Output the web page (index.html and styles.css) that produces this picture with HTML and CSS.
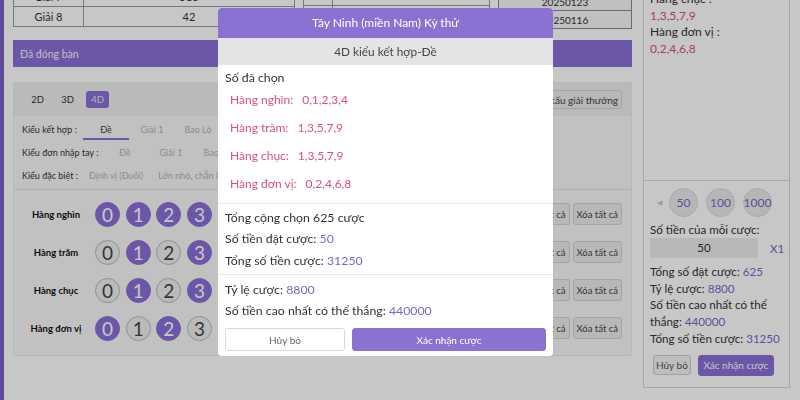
FILE: index.html
```html
<!DOCTYPE html>
<html>
<head>
    <meta charset="utf-8">
    <title>4D kiểu kết hợp - Đề</title>
    <link rel="stylesheet" href="styles.css">
</head>
<body>
    <div class="strip"></div>

    <main class="main">
        <div class="results">
            <table class="res res-prize">
                <tr><td class="c1">Giải 7</td><td>513</td></tr>
                <tr><td class="c1">Giải 8</td><td>42</td></tr>
            </table>
            <table class="res res-mid">
                <tr><td class="c1">1</td><td>0123</td></tr>
                <tr><td class="c1">2</td><td>4567</td></tr>
            </table>
            <table class="res res-date">
                <tr><td>20250123</td></tr>
                <tr><td>20250116</td></tr>
            </table>
        </div>

        <div class="closed">Đã đóng bàn</div>

        <section class="board">
            <div class="board-head">
                <div class="tabs">
                    <span class="tab">2D</span>
                    <span class="tab">3D</span>
                    <span class="tab active">4D</span>
                </div>
                <button class="btn-light">Cơ cấu giải thưởng</button>
            </div>

            <div class="types">
                <div class="type-row">
                    <span class="type-label w1">Kiểu kết hợp :</span>
                    <span class="opt active">Đề</span>
                    <span class="opt">Giải 1</span>
                    <span class="opt">Bao Lô</span>
                </div>
                <div class="type-row">
                    <span class="type-label w2">Kiểu đơn nhập tay :</span>
                    <span class="opt">Đề</span>
                    <span class="opt">Giải 1</span>
                    <span class="opt">Bao Lô</span>
                </div>
                <div class="type-row">
                    <span class="type-label w3">Kiểu đặc biệt :</span>
                    <span class="opt free">Định vị (Đuôi)</span>
                    <span class="opt free">Lớn nhỏ, chẵn lẻ</span>
                </div>
            </div>

            <div class="picks" id="picks"></div>
        </section>
    </main>

    <aside class="side">
        <div class="side-top">
            <div>Hàng nghìn :</div>
            <div class="pink">0,1,2,3,4</div>
            <div>Hàng trăm :</div>
            <div class="pink">1,3,5,7,9</div>
            <div>Hàng chục :</div>
            <div class="pink">1,3,5,7,9</div>
            <div>Hàng đơn vị :</div>
            <div class="pink">0,2,4,6,8</div>
        </div>
        <div class="side-bottom">
            <div class="chips">
                <span class="chip-arrow">◀</span>
                <span class="chip">50</span>
                <span class="chip">100</span>
                <span class="chip">1000</span>
            </div>
            <div class="side-line">Số tiền của mỗi cược:</div>
            <div class="amount">
                <span class="amount-box">50</span>
                <span class="amount-x">X1</span>
            </div>
            <div class="side-stats">
                <div>Tổng số đặt cược: <span class="num">625</span></div>
                <div>Tỷ lệ cược: <span class="num">8800</span></div>
                <div>Số tiền cao nhất có thể thắng: <span class="num">440000</span></div>
                <div>Tổng số tiền cược: <span class="num">31250</span></div>
            </div>
            <div class="side-actions">
                <button class="btn-small">Hủy bỏ</button>
                <button class="btn-small primary">Xác nhận cược</button>
            </div>
        </div>
    </aside>

    <div class="overlay"></div>

    <div class="modal">
        <div class="modal-title">Tây Ninh (miền Nam) Kỳ thứ</div>
        <div class="modal-sub">4D kiểu kết hợp-Đề</div>
        <div class="modal-sec sec-picked">
            <div class="line">Số đã chọn</div>
            <div class="picked"><span>Hàng nghìn:</span><span class="vals">0,1,2,3,4</span></div>
            <div class="picked"><span>Hàng trăm:</span><span class="vals">1,3,5,7,9</span></div>
            <div class="picked"><span>Hàng chục:</span><span class="vals">1,3,5,7,9</span></div>
            <div class="picked"><span>Hàng đơn vị:</span><span class="vals">0,2,4,6,8</span></div>
        </div>
        <div class="modal-sec sec-sum">
            <div class="line">Tổng cộng chọn 625 cược</div>
            <div class="line">Số tiền đặt cược: <span class="num">50</span></div>
            <div class="line">Tổng số tiền cược: <span class="num">31250</span></div>
        </div>
        <div class="modal-sec sec-win">
            <div class="line">Tỷ lệ cược: <span class="num">8800</span></div>
            <div class="line">Số tiền cao nhất có thể thắng: <span class="num">440000</span></div>
            <div class="modal-actions">
                <button class="btn-cancel">Hủy bỏ</button>
                <button class="btn-confirm">Xác nhận cược</button>
            </div>
        </div>
    </div>

    <script>
        // selected numbers per position, same as the summary
        const rows = [
            { name: 'Hàng nghìn', picked: [0, 1, 2, 3, 4] },
            { name: 'Hàng trăm', picked: [1, 3, 5, 7, 9] },
            { name: 'Hàng chục', picked: [1, 3, 5, 7, 9] },
            { name: 'Hàng đơn vị', picked: [0, 2, 4, 6, 8] }
        ];

        const picks = document.getElementById('picks');
        rows.forEach(row => {
            const el = document.createElement('div');
            el.className = 'pick-row';

            let balls = '';
            for (let n = 0; n < 10; n++) {
                const on = row.picked.includes(n) ? ' on' : '';
                balls += `<span class="ball${on}">${n}</span>`;
            }

            el.innerHTML = `
                <span class="pick-label">${row.name}</span>
                <div class="balls">${balls}</div>
                <div class="pick-actions">
                    <button class="btn-light">Chọn tất cả</button>
                    <button class="btn-light">Xóa tất cả</button>
                </div>`;
            picks.appendChild(el);
        });
    </script>
</body>
</html>
```

FILE: styles.css
```css
* { box-sizing: border-box; }

body {
    margin: 0;
    height: 400px;
    overflow: hidden;
    display: flex;
    align-items: flex-start;
    background: #fff;
    color: #333;
    font-family: Lato, "Noto Sans", sans-serif;
    font-size: 12px;
}

button {
    font-family: inherit;
    cursor: pointer;
}

.strip {
    width: 4px;
    height: 400px;
    background: #7a61c6;
}

/* left column */
.main {
    width: 619px;
    margin-left: 9px;
}

.results {
    display: flex;
    gap: 8px;
    height: 41px;
    margin-top: -15px;
}
.res {
    border-collapse: collapse;
    font-size: 11px;
    color: #333;
}
.res td {
    border: 1px solid #9a9a9a;
    height: 20px;
    padding: 0;
    text-align: center;
}
.res .c1 { width: 70px; }
.res-prize { width: 282px; }
.res-prize tr:first-child td { height: 21px; }
.res-mid { width: 187px; }
.res-mid .c1 { width: 29px; }
.res-date {
    width: 134px;
    margin-top: 7px;
    font-size: 10px;
}
.res-date td {
    background: #f6f6f6;
    border-color: #8a8a8a;
    height: 18px;
}

.closed {
    margin-top: 14px;
    height: 27px;
    padding-left: 7px;
    display: flex;
    align-items: center;
    background: #8a6fd6;
    color: #f4f2fa;
    font-size: 10.5px;
}

.board {
    margin-top: 15px;
    height: 274px;
    background: #f8f8f8;
    border: 1px solid #ececec;
}

.board-head {
    height: 33px;
    display: flex;
    align-items: center;
    justify-content: space-between;
    padding: 0 9px 0 12px;
    background: #efefef;
}
.tabs {
    display: flex;
    gap: 7px;
}
.tab {
    width: 23px;
    height: 17px;
    line-height: 17px;
    text-align: center;
    font-size: 9.5px;
    color: #333;
}
.tab.active {
    background: #8a6fd6;
    color: #e8e2f8;
    border-radius: 3px;
}

.btn-light {
    height: 20px;
    padding: 0 3px;
    background: #ececec;
    border: 1px solid #d2d2d2;
    border-radius: 3px;
    color: #444;
    font-size: 9.5px;
    white-space: nowrap;
}
.board-head .btn-light {
    height: 19px;
    font-size: 10px;
}

.types {
    padding: 2px 0 2px 8px;
    border-bottom: 1px solid #e2e2e2;
}
.type-row {
    height: 23px;
    display: flex;
    align-items: center;
    font-size: 9px;
    white-space: nowrap;
}
.type-label { color: #333; }
.type-label.w1 { width: 61px; }
.type-label.w2 { width: 80px; }
.type-label.w3 { width: 59px; }
.opt {
    width: 46px;
    height: 21px;
    line-height: 21px;
    text-align: center;
    color: #b3b3b3;
}
.opt.active {
    color: #444;
    border-bottom: 2px solid #8a6fd6;
}
.opt.free {
    width: auto;
    padding: 0 7px 0 8px;
}

.picks { padding: 5px 9px 0 3px; }
.pick-row {
    height: 38px;
    display: flex;
    align-items: center;
}
.pick-label {
    width: 78px;
    text-align: center;
    font-size: 9.5px;
    font-weight: 700;
    color: #111;
    white-space: nowrap;
}
.balls {
    display: flex;
    gap: 5.7px;
    width: 400px;
}
.ball {
    flex: none;
    width: 25px;
    height: 25px;
    border-radius: 50%;
    display: flex;
    align-items: center;
    justify-content: center;
    font-size: 19px;
    color: #444;
    background: #efefef;
    border: 1px solid #b9b9b9;
}
.ball.on {
    background: #8a6fd6;
    border-color: #8a6fd6;
    color: #fff;
}
.pick-actions {
    margin-left: auto;
    display: flex;
    gap: 3px;
}
.pick-actions .btn-light { height: 22px; }

/* right column */
.side {
    width: 147px;
    margin-left: 11px;
    margin-top: -80px;
    height: 468px;
    border: 1px solid #d6d6d6;
    display: flex;
    flex-direction: column;
}
.side-top {
    flex: none;
    height: 260px;
    padding: 4px 6px 0;
    font-size: 12px;
    line-height: 16.5px;
    border-bottom: 1px solid #dcdcdc;
}
.pink { color: #d5507a; }

.side-bottom {
    padding: 7px 4px 0 6px;
    font-size: 11.6px;
}
.chips {
    height: 28px;
    display: flex;
    align-items: center;
    gap: 8px;
    padding-left: 7px;
}
.chip-arrow {
    font-size: 7px;
    color: #c9c9c9;
    width: 6px;
    margin-right: -2px;
}
.chip {
    width: 29px;
    height: 29px;
    border-radius: 50%;
    background: #e9e9e9;
    border: 1px solid #dadada;
    color: #7a67c7;
    font-size: 12px;
    display: flex;
    align-items: center;
    justify-content: center;
}
.side-line {
    margin-top: 6px;
    line-height: 16px;
}
.amount {
    display: flex;
    align-items: center;
    height: 20px;
}
.amount-box {
    width: 108px;
    height: 20px;
    line-height: 20px;
    text-align: center;
    background: #ececec;
    color: #333;
}
.amount-x {
    margin-left: 12px;
    color: #7a67c7;
}
.side-stats {
    margin-top: 6px;
    line-height: 16.7px;
}
.num { color: #7a67c7; }
.side-actions {
    margin-top: 7px;
    display: flex;
    gap: 7px;
    padding-left: 3px;
}
.btn-small {
    height: 20px;
    padding: 0 2px;
    font-size: 10px;
    background: #f4f4f4;
    color: #555;
    border: 1px solid #cfcfcf;
    border-radius: 3px;
    white-space: nowrap;
}
.btn-small.primary {
    width: 76px;
    height: 21px;
    background: #8a6fd6;
    border-color: #8a6fd6;
    color: #fff;
}

/* dimmed page and dialog on top */
.overlay {
    position: fixed;
    inset: 0;
    background: rgba(0, 0, 0, 0.22);
}

.modal {
    position: fixed;
    left: 218px;
    top: 8px;
    width: 335px;
    background: #fff;
    border-radius: 4px;
    overflow: hidden;
    font-size: 12.3px;
    color: #333;
}
.modal-title {
    height: 30px;
    line-height: 30px;
    text-align: center;
    background: #8b72d2;
    color: #fff;
    font-size: 12px;
}
.modal-sub {
    height: 27px;
    line-height: 27px;
    text-align: center;
    background: #e4e4e4;
    color: #444;
    font-size: 11.8px;
}
.modal-sec { padding: 0 7px; }
.modal-sec .line { line-height: 21.5px; }
.sec-picked {
    padding-top: 5px;
    padding-bottom: 5px;
    border-bottom: 1px solid #e6e6e6;
}
.sec-picked .line { line-height: 15px; }
.picked {
    height: 28.2px;
    display: flex;
    align-items: center;
    padding-left: 5px;
    color: #d5507a;
    font-size: 12px;
}
.picked .vals { margin-left: 9px; }
.sec-sum {
    padding-top: 3px;
    padding-bottom: 3px;
    border-bottom: 1px solid #e6e6e6;
}
.sec-win {
    padding-top: 4px;
    padding-bottom: 5px;
}
.sec-win .line { line-height: 21px; }
.modal-actions {
    margin-top: 7px;
    display: flex;
    gap: 7px;
}
.btn-cancel,
.btn-confirm {
    height: 23px;
    border-radius: 3px;
    font-size: 10px;
}
.btn-cancel {
    width: 120px;
    background: #fff;
    border: 1px solid #d8d8d8;
    color: #666;
}
.btn-confirm {
    flex: 1;
    background: #8b72d2;
    border: 1px solid #8b72d2;
    color: #fff;
}
```
